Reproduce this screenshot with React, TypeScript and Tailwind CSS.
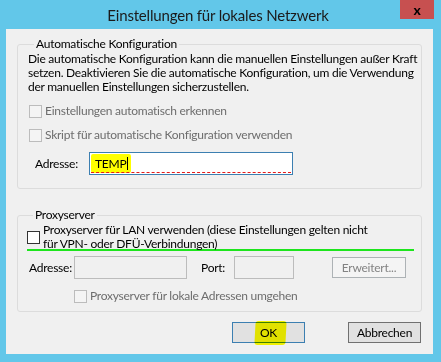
import React from 'react';

function CheckBox({ disabled }: { disabled?: boolean }) {
  return (
    <span
      className={
        disabled
          ? 'w-[13px] h-[13px] shrink-0 border border-[#bcbcbc] bg-[#f4f4f4]'
          : 'w-[13px] h-[13px] shrink-0 border border-[#333333] bg-white'
      }
    />
  );
}

export default function App() {
  return (
    <div className="w-[441px] h-[362px] bg-[#62c7e9] flex flex-col font-['Lato',sans-serif] text-[12px] tracking-[-0.25px] text-black overflow-hidden">
      {/* Title bar */}
      <div className="h-[29px] flex items-start shrink-0">
        <div className="flex-1 pl-[36px] pt-[5px] text-center text-[15px] leading-[20px] tracking-[-0.18px] text-[#1b1b1b]">
          Einstellungen für lokales Netzwerk
        </div>
        <div className="w-[34px] h-[19px] mr-[7px] bg-[#c75050] flex items-center justify-center text-[14px] font-bold leading-none text-black">
          x
        </div>
      </div>

      {/* Client area */}
      <div className="flex-1 ml-[6px] mr-[8px] mb-[8px] bg-[#f0f0f0] px-[11px] pt-[7px]">
        {/* Automatische Konfiguration */}
        <fieldset className="border border-[#dcdcdc] rounded-[3px] pl-[10px] pb-[13px]">
          <legend className="ml-[6px] px-[2px] leading-[16px]">Automatische Konfiguration</legend>
          <p className="leading-[14px] whitespace-nowrap">
            Die automatische Konfiguration kann die manuellen Einstellungen außer Kraft
            <br />
            setzen. Deaktivieren Sie die automatische Konfiguration, um die Verwendung
            <br />
            der manuellen Einstellungen sicherzustellen.
          </p>
          <div className="mt-[9px] flex items-center gap-[3px] h-[16px] pl-[1px] text-[#6d6d6d]">
            <CheckBox disabled />
            <span>Einstellungen automatisch erkennen</span>
          </div>
          <div className="mt-[8px] flex items-center gap-[3px] h-[16px] pl-[1px] text-[#6d6d6d]">
            <CheckBox disabled />
            <span>Skript für automatische Konfiguration verwenden</span>
          </div>
          <div className="mt-[9px] flex items-center">
            <span className="ml-[7px] w-[54px]">Adresse:</span>
            <div className="relative w-[204px] h-[23px] border border-[#3c7fb1] bg-white flex items-center pl-[1px]">
              <span className="bg-[#ffff00] h-[19px] pl-[4px] pr-[1px] flex items-center rounded-[2px]">
                TEMP
                <span className="ml-[1px] w-px h-[13px] bg-black" />
                <span className="w-[2px]" />
              </span>
              <span className="absolute left-[1px] right-[1px] bottom-[1px] border-b border-dashed border-[#e41b1b]" />
            </div>
          </div>
        </fieldset>

        {/* Proxyserver */}
        <fieldset className="mt-[18px] border border-[#dcdcdc] rounded-[3px] pl-[9px] pb-[7px]">
          <legend className="ml-[6px] px-[2px] leading-[16px]">Proxyserver</legend>
          <div className="flex items-center gap-[3px]">
            <CheckBox />
            <span className="leading-[14px] whitespace-nowrap">
              Proxyserver für LAN verwenden (diese Einstellungen gelten nicht
              <br />
              für VPN- oder DFÜ-Verbindungen)
            </span>
          </div>
          <div className="-mt-[2px] w-[387px] h-[2px] bg-[#1de51d]" />
          <div className="mt-[5px] flex items-center">
            <span className="ml-[2px] w-[45px]">Adresse:</span>
            <div className="w-[113px] h-[23px] border border-[#bcbcbc]" />
            <span className="ml-[14px] w-[33px]">Port:</span>
            <div className="w-[60px] h-[23px] border border-[#bcbcbc]" />
            <div className="ml-[38px] w-[74px] h-[21px] border border-[#adb2b5] bg-[#f4f4f4] flex items-center justify-center text-[#838383]">
              Erweitert...
            </div>
          </div>
          <div className="mt-[9px] ml-[47px] flex items-center gap-[3px] h-[16px] text-[#6d6d6d]">
            <CheckBox disabled />
            <span>Proxyserver für lokale Adressen umgehen</span>
          </div>
        </fieldset>

        {/* Buttons */}
        <div className="mt-[10px] mr-[1px] flex justify-end gap-[43px]">
          <div className="relative w-[73px] h-[21px] border border-[#3c7fb1] bg-[#e1e1e1] flex items-center justify-center">
            <span className="absolute left-[22px] w-[31px] -top-[2px] h-[24px] bg-[#ffff00] mix-blend-multiply rounded-[3px] -skew-x-3" />
            <span className="relative">OK</span>
          </div>
          <div className="w-[73px] h-[21px] border border-[#707070] bg-[#e1e1e1] flex items-center justify-center">
            Abbrechen
          </div>
        </div>
      </div>
    </div>
  );
}
